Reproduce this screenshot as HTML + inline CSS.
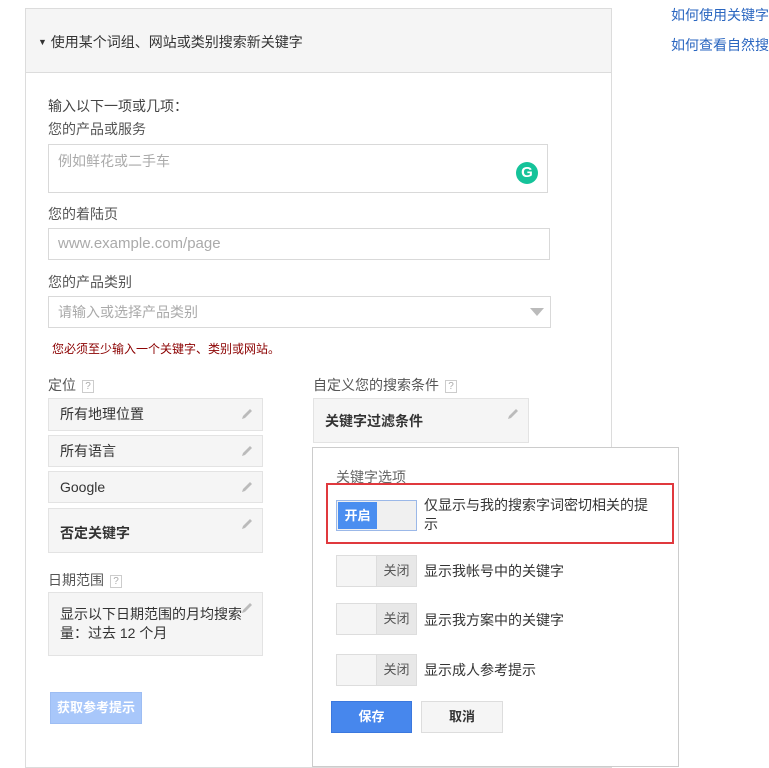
<!DOCTYPE html>
<html><head><meta charset="utf-8"><style>
*{box-sizing:border-box;margin:0;padding:0}
body{width:769px;height:741px;overflow:hidden;background:#fff;font-family:"Liberation Sans","Noto Sans CJK SC",sans-serif;font-size:14px;color:#444;position:relative}
.a{position:absolute}
.panel{left:25px;top:8px;width:587px;height:760px;border:1px solid #dcdcdc}
.hdr{left:26px;top:9px;width:585px;height:64px;background:#f5f5f5;border-bottom:1px solid #dcdcdc}
.lbl{color:#555;font-size:14px}
.inp{border:1px solid #d9d9d9;background:#fff;color:#aaa;padding:0 9px;font-size:14px}
.box{left:48px;width:215px;background:#f5f5f5;border:1px solid #e3e3e3;color:#333;padding-left:11px;font-size:14px}
.pen{position:absolute;right:8px;top:8px;width:14px;height:14px}
.q{display:inline-block;width:12px;height:13px;border:1px solid #ccc;font-size:10px;line-height:11px;text-align:center;color:#aaa;margin-left:6px;vertical-align:1px}
.tg{left:336px;width:81px;height:32px;border:1px solid #ddd;background:#f5f5f5}
.tg .off{position:absolute;right:0;top:0;width:40px;height:30px;background:#e8e8e8;border-left:1px solid #ddd;text-align:center;line-height:30px;font-size:13px;color:#555}
.tt{left:424px;color:#333;font-size:14px}
</style></head><body>
<div class="a panel"></div>
<div class="a hdr"></div>
<div class="a" style="left:38px;top:32px;color:#333;font-size:14px"><span style="font-size:9px;vertical-align:2px">▼</span> 使用某个词组、网站或类别搜索新关键字</div>
<a class="a" style="left:671px;top:5px;color:#2a66c0;font-size:14px;white-space:nowrap">如何使用关键字</a>
<a class="a" style="left:671px;top:35px;color:#2a66c0;font-size:14px;white-space:nowrap">如何查看自然搜</a>

<div class="a lbl" style="left:48px;top:96px;color:#444">输入以下一项或几项：</div>
<div class="a lbl" style="left:48px;top:119px">您的产品或服务</div>
<div class="a inp" style="left:48px;top:144px;width:500px;height:49px;padding-top:6px">例如鲜花或二手车</div>
<div class="a" style="left:516px;top:162px;width:22px;height:22px;border-radius:50%;background:#15c39a;color:#fff;font-weight:bold;font-size:15px;text-align:center;line-height:22px">G</div>
<div class="a lbl" style="left:48px;top:204px">您的着陆页</div>
<div class="a inp" style="left:48px;top:228px;width:502px;height:32px;line-height:30px;font-size:15px">www.example.com/page</div>
<div class="a lbl" style="left:48px;top:272px">您的产品类别</div>
<div class="a inp" style="left:48px;top:296px;width:503px;height:32px;line-height:30px">请输入或选择产品类别</div>
<div class="a" style="left:530px;top:308px;width:0;height:0;border-left:7px solid transparent;border-right:7px solid transparent;border-top:8px solid #bbb"></div>
<div class="a" style="left:52px;top:340px;color:#8b0000;font-size:12px">您必须至少输入一个关键字、类别或网站。</div>

<div class="a lbl" style="left:48px;top:375px">定位<span class="q">?</span></div>
<div class="a box" style="top:398px;height:33px;line-height:31px">所有地理位置<svg class="pen" viewBox="0 0 14 14"><path d="M2 12l1-3 7-7 2 2-7 7z" fill="#bbb"/></svg></div>
<div class="a box" style="top:435px;height:32px;line-height:30px">所有语言<svg class="pen" viewBox="0 0 14 14"><path d="M2 12l1-3 7-7 2 2-7 7z" fill="#bbb"/></svg></div>
<div class="a box" style="top:471px;height:32px;line-height:30px;font-size:14px">Google<svg class="pen" viewBox="0 0 14 14"><path d="M2 12l1-3 7-7 2 2-7 7z" fill="#bbb"/></svg></div>
<div class="a box" style="top:508px;height:45px;line-height:45px;font-weight:bold;padding-top:2px">否定关键字<svg class="pen" viewBox="0 0 14 14"><path d="M2 12l1-3 7-7 2 2-7 7z" fill="#bbb"/></svg></div>
<div class="a lbl" style="left:48px;top:570px;font-size:14px">日期范围<span class="q">?</span></div>
<div class="a box" style="top:592px;height:64px;padding-top:12px;line-height:19px;padding-right:20px">显示以下日期范围的月均搜索量：过去 12 个月<svg class="pen" viewBox="0 0 14 14"><path d="M2 12l1-3 7-7 2 2-7 7z" fill="#bbb"/></svg></div>
<div class="a" style="left:50px;top:692px;width:92px;height:32px;background:#a8c7fa;color:#fff;font-weight:bold;font-size:13px;text-align:center;line-height:30px;border:1px solid #9dbdf3">获取参考提示</div>

<div class="a lbl" style="left:313px;top:375px">自定义您的搜索条件<span class="q">?</span></div>
<div class="a box" style="left:313px;width:216px;top:398px;height:45px;line-height:45px;font-weight:bold">关键字过滤条件<svg class="pen" viewBox="0 0 14 14"><path d="M2 12l1-3 7-7 2 2-7 7z" fill="#bbb"/></svg></div>
<div class="a" style="left:312px;top:447px;width:367px;height:320px;border:1px solid #ccc;background:#fff"></div>
<div class="a lbl" style="left:336px;top:467px;color:#666">关键字选项</div>
<div class="a" style="left:326px;top:483px;width:348px;height:61px;border:2px solid #e0393e"></div>
<div class="a" style="left:336px;top:500px;width:81px;height:31px;border:1px solid #9bb8e8;background:#f0f0f0"><div style="position:absolute;left:1px;top:1px;width:39px;height:27px;background:#4a8ef0;color:#fff;font-weight:bold;font-size:13px;line-height:27px;text-align:center">开启</div></div>
<div class="a tt" style="left:424px;top:496px;width:230px;line-height:19px">仅显示与我的搜索字词密切相关的提示</div>
<div class="a tg" style="top:555px"><div class="off">关闭</div></div>
<div class="a tt" style="top:561px">显示我帐号中的关键字</div>
<div class="a tg" style="top:603px"><div class="off">关闭</div></div>
<div class="a tt" style="top:610px">显示我方案中的关键字</div>
<div class="a tg" style="top:654px"><div class="off">关闭</div></div>
<div class="a tt" style="top:660px">显示成人参考提示</div>
<div class="a" style="left:331px;top:701px;width:81px;height:32px;background:#4787ed;border:1px solid #3b78de;color:#fff;font-weight:bold;font-size:13px;text-align:center;line-height:30px">保存</div>
<div class="a" style="left:421px;top:701px;width:82px;height:32px;background:#f5f5f5;border:1px solid #ddd;color:#333;font-weight:bold;font-size:13px;text-align:center;line-height:30px">取消</div>
</body></html>
